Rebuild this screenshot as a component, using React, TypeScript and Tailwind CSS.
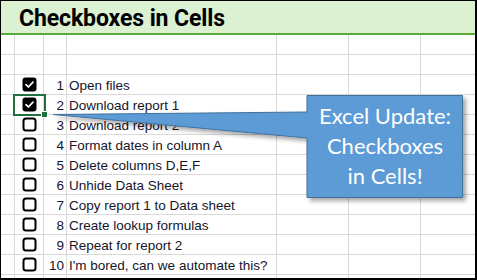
import React from 'react';

const tasks = [
  'Open files',
  'Download report 1',
  'Download report 2',
  'Format dates in column A',
  'Delete columns D,E,F',
  'Unhide Data Sheet',
  'Copy report 1 to Data sheet',
  'Create lookup formulas',
  'Repeat for report 2',
  "I'm bored, can we automate this?",
];

const done = [true, true];

const cell = 'h-[20px] border-r border-b border-[#d9d9d9]';
const lastCell = 'h-[20px] border-b border-[#d9d9d9]';

function Checkbox({ checked }: { checked: boolean }) {
  return (
    <svg width="15" height="15" viewBox="0 0 15 15">
      {checked ? (
        <>
          <rect x="0.5" y="0.5" width="14" height="14" rx="3" fill="#000" />
          <path d="M4 7.6 L6.4 10 L11 5.2" fill="none" stroke="#fff" strokeWidth="1.7" strokeLinecap="round" strokeLinejoin="round" />
        </>
      ) : (
        <rect x="1.5" y="1.5" width="12" height="12" rx="2.5" fill="#fff" stroke="#000" strokeWidth="2" />
      )}
    </svg>
  );
}

function BlankRow() {
  return (
    <>
      <div className={cell} />
      <div className={cell} />
      <div className={cell} />
      <div className={cell} />
      <div className={cell} />
      <div className={cell} />
      <div className={lastCell} />
    </>
  );
}

export default function App() {
  return (
    <div
      className="relative w-[477px] h-[280px] overflow-hidden bg-white border-l border-t border-r-2 border-b-2 border-black"
      style={{ fontFamily: '"Liberation Sans", Arial, sans-serif' }}
    >
      <div className="h-[34px] bg-[#dcf1d2] border-b-2 border-[#58ad38] flex items-center pl-[18px] pt-[5px]">
        <h1 className="text-[23px] font-bold text-black tracking-[-0.1px]" style={{ fontFamily: 'Roboto, "Liberation Sans", sans-serif' }}>
          Checkboxes in Cells
        </h1>
      </div>

      <div className="grid grid-cols-[14px_29px_23px_210px_72px_72px_1fr] text-[13.5px] leading-[16px] text-[#15152a]">
        <BlankRow />
        <BlankRow />
        {tasks.map((t, i) => (
          <React.Fragment key={t}>
            <div className={cell} />
            <div className={`${cell} flex items-center justify-center`}>
              <Checkbox checked={!!done[i]} />
            </div>
            <div className={`${cell} flex items-end justify-end pr-[2px]`}>{i + 1}</div>
            <div className={`${cell} flex items-end pl-[2px] whitespace-nowrap`}>{t}</div>
            <div className={cell} />
            <div className={cell} />
            <div className={lastCell} />
          </React.Fragment>
        ))}
        <BlankRow />
      </div>

      {/* selected cell */}
      <div className="absolute left-[12px] top-[93px] w-[33px] h-[22px] border-2 border-[#21703f]" />
      <div className="absolute left-[40px] top-[110px] w-[7px] h-[7px] bg-[#21703f] border border-white" />

      {/* callout */}
      <svg className="absolute left-0 top-0 pointer-events-none" width="477" height="280">
        <defs>
          <filter id="sh" x="-10%" y="-10%" width="130%" height="130%">
            <feDropShadow dx="3" dy="3" stdDeviation="2" floodColor="#000" floodOpacity="0.35" />
          </filter>
        </defs>
        <polygon
          points="52,113.5 306,111 306,94.5 461.5,94.5 461.5,196.5 306,196.5 306,137 "
          fill="#5b9bd5"
          stroke="#41719c"
          strokeWidth="1"
          filter="url(#sh)"
        />
      </svg>
      <div
        className="absolute left-[306px] top-[95px] w-[156px] h-[102px] flex flex-col items-center justify-center text-white text-[22px] leading-[30px] pb-[2px]"
        style={{ fontFamily: 'Lato, "Open Sans", sans-serif' }}
      >
        <span>Excel Update:</span>
        <span>Checkboxes</span>
        <span>in Cells!</span>
      </div>
    </div>
  );
}
